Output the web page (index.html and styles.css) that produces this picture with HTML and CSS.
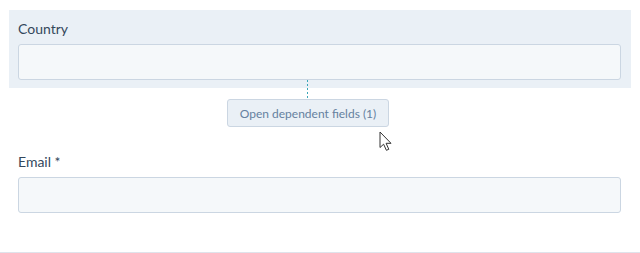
FILE: index.html
```html
<!DOCTYPE html>
<html lang="en">
<head>
<meta charset="utf-8">
<title>Dependent fields</title>
<link rel="stylesheet" href="styles.css">
</head>
<body>
<div class="page">
  <div class="panel">
    <label class="label">Country</label>
    <div class="input"></div>
  </div>
  <div class="connector"></div>
  <button class="dep-btn" type="button">Open dependent fields (1)</button>
  <div class="field">
    <label class="label">Email *</label>
    <div class="input"></div>
  </div>
  <div class="divider"></div>
  <svg class="cursor" width="14" height="21" viewBox="0 0 14 21" aria-hidden="true">
    <path d="M1 1 L1 16.5 L4.6 13.2 L7.4 19.3 L9.8 18.3 L7.1 12.3 L12 12.3 Z" fill="#fff" stroke="#333" stroke-width="1" stroke-linejoin="miter"/>
  </svg>
</div>
</body>
</html>
```
FILE: styles.css
```css
html, body {
  margin: 0;
  padding: 0;
  background: #ffffff;
}
body {
  font-family: Lato, "Open Sans", "Liberation Sans", sans-serif;
  color: #33475b;
}
.page {
  position: relative;
  width: 640px;
  height: 253px;
  padding-top: 10px;
  box-sizing: border-box;
}
.panel {
  margin-left: 9px;
  width: 622px;
  box-sizing: border-box;
  padding: 9px 10px 8px 9px;
  background: #eaf0f6;
}
.label {
  display: block;
  font-size: 14px;
  line-height: 20px;
  height: 20px;
  margin-bottom: 5px;
  color: #33475b;
}
.input {
  height: 36px;
  box-sizing: border-box;
  background: #f5f8fa;
  border: 1px solid #cbd6e2;
  border-radius: 3px;
}
.connector {
  margin-left: 307px;
  margin-top: -8px;
  width: 1px;
  height: 19px;
  background: repeating-linear-gradient(to bottom, #3aa6b9 0 2px, transparent 2px 4px);
  position: relative;
}
.dep-btn {
  display: block;
  margin: 0 0 0 227px;
  width: 162px;
  height: 28px;
  box-sizing: border-box;
  padding: 0;
  background: #eaf0f6;
  border: 1px solid #cbd6e2;
  border-radius: 3px;
  font-family: Lato, "Open Sans", "Liberation Sans", sans-serif;
  font-size: 12px;
  font-weight: 400;
  color: #6581a0;
  letter-spacing: 0;
}
.field {
  margin-top: 25px;
  margin-left: 18px;
  width: 603px;
}
.divider {
  margin-top: 39px;
  height: 1px;
  background: #dfe3eb;
}
.cursor {
  position: absolute;
  left: 379px;
  top: 131px;
}
```
